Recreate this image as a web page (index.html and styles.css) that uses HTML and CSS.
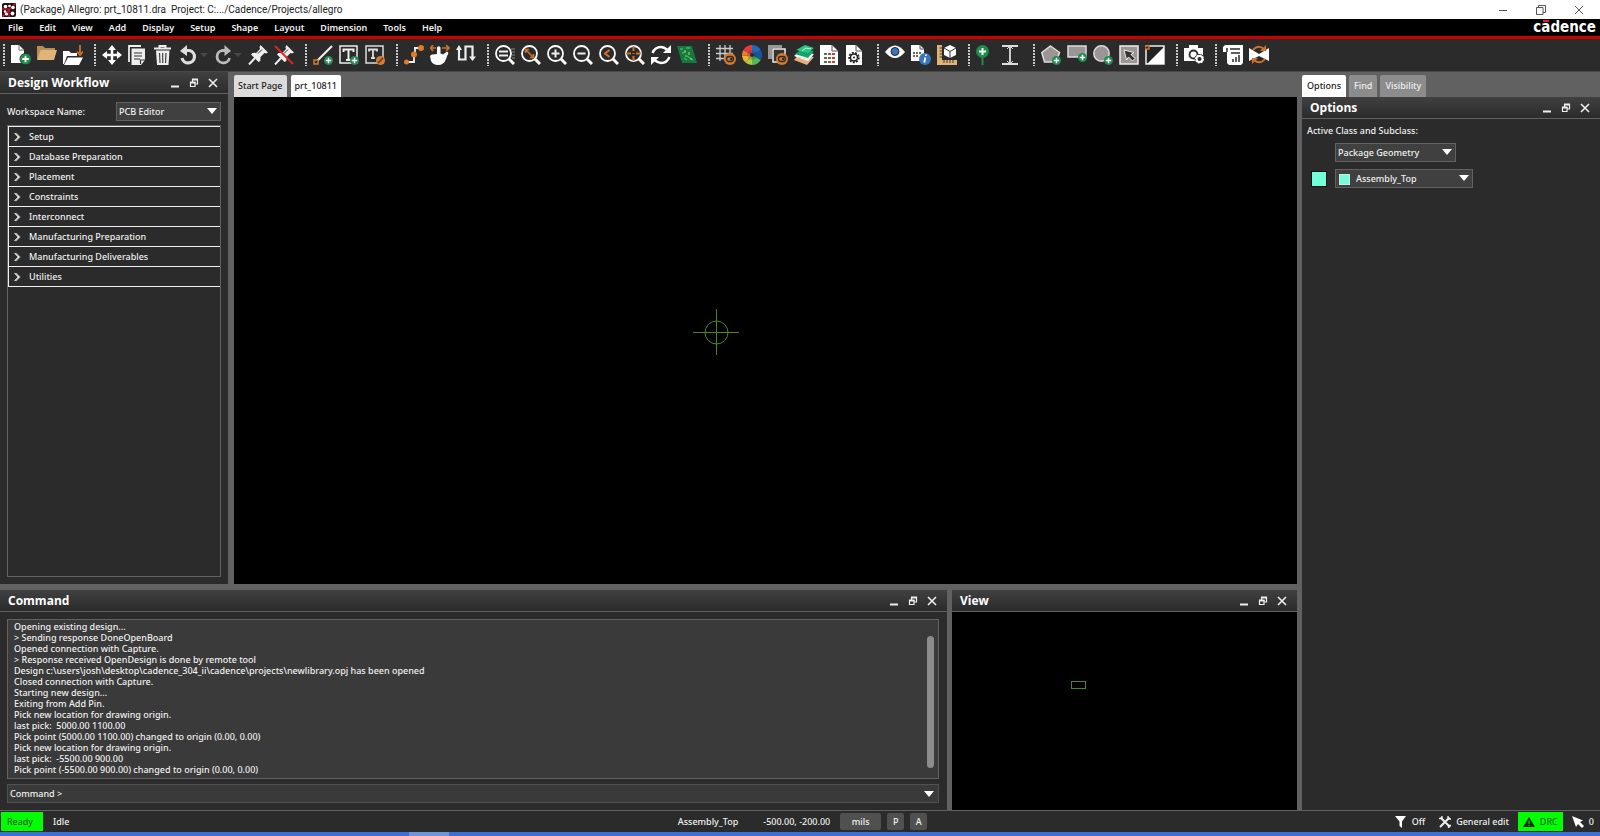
FILE: index.html
```html
<!DOCTYPE html>
<html lang="en">
<head>
    <meta charset="UTF-8">
    <meta name="viewport" content="width=device-width, initial-scale=1.0">
    <title>Allegro - prt_10811.dra</title>
    <link rel="stylesheet" href="styles.css">
</head>
<body>
    <!-- shared icon parts -->
    <svg class="defs" width="0" height="0">
        <symbol id="plus" viewBox="0 0 9 9">
            <circle cx="4.5" cy="4.5" r="4.5" fill="#1d8c4c"/>
            <path d="M4.500 1.800V7.200M1.800 4.500H7.200" stroke="#fff" stroke-width="1.5"/>
        </symbol>
        <symbol id="lens" viewBox="0 0 20 20">
            <circle cx="8.500" cy="8.500" r="7.500" fill="none" stroke="#fff" stroke-width="1.800"/>
            <path d="M14 14L19 19" stroke="#fff" stroke-width="3"/>
        </symbol>
        <symbol id="toggle" viewBox="0 0 12 12">
            <circle cx="6" cy="6" r="6" fill="#d67a2c"/>
            <rect x="2.500" y="3.500" width="7" height="5" rx="2.500" fill="none" stroke="#2b2b2b" stroke-width="1.300"/>
            <circle cx="7.200" cy="6" r="1.300" fill="#2b2b2b"/>
        </symbol>
        <symbol id="tack" viewBox="0 0 20 20">
            <path d="M12.500 0L20 7.500L18 8.500L16.500 8L12.500 12L12.300 16L10.500 17L3 9.500L4.500 8L8.500 7.700L12 4L11.500 2Z" fill="#eee"/>
            <path d="M7 13L1 19.500" stroke="#eee" stroke-width="2"/>
            <path d="M10 8.500L14 4.500" stroke="#2b2b2b" stroke-width="1"/>
        </symbol>
        <symbol id="min" viewBox="0 0 10 10"><path d="M1 8.500H9" stroke="#eee" stroke-width="2"/></symbol>
        <symbol id="float" viewBox="0 0 10 10">
            <path d="M3.500 4V1.500H8.500V6H6.500M1.500 4.500H6V8.500H1.500Z" fill="none" stroke="#eee" stroke-width="1.200"/>
            <path d="M3 1.500H9M1 4.500H6.500" stroke="#eee" stroke-width="1.800"/>
        </symbol>
        <symbol id="close" viewBox="0 0 10 10"><path d="M1 1L9 9M9 1L1 9" stroke="#eee" stroke-width="1.600"/></symbol>
    </svg>

    <div class="titlebar">
        <svg width="14" height="14" viewBox="0 0 14 14">
            <rect width="14" height="14" rx="2" fill="#211"/>
            <path d="M0 14L14 0M7 7V14M0 6H7" stroke="#c8102e" stroke-width="1.500"/>
            <g fill="#fff"><circle cx="3.500" cy="3.500" r="1.800"/><circle cx="7.500" cy="3" r="1.300"/><circle cx="11" cy="4.500" r="1.800"/><circle cx="3" cy="8.500" r="1.300"/><circle cx="4.500" cy="11" r="1.600"/><circle cx="10.500" cy="10.500" r="1.900"/></g>
        </svg>
        <span class="title">(Package) Allegro: prt_10811.dra&nbsp; Project: C:.../Cadence/Projects/allegro</span>
        <div class="window-buttons">
            <button aria-label="Minimize"><svg width="10" height="10" viewBox="0 0 10 10"><path d="M1 5.500H9" stroke="#555"/></svg></button>
            <button aria-label="Restore"><svg width="10" height="10" viewBox="0 0 10 10"><path d="M.5 2.500H7V9.500H.5ZM2.500 2.500V.5H9.500V7.500H7" fill="none" stroke="#555"/></svg></button>
            <button aria-label="Close"><svg width="10" height="10" viewBox="0 0 10 10"><path d="M1 1L9 9M9 1L1 9" stroke="#555"/></svg></button>
        </div>
    </div>

    <nav class="menubar">
        <a href="#">File</a>
        <a href="#">Edit</a>
        <a href="#">View</a>
        <a href="#">Add</a>
        <a href="#">Display</a>
        <a href="#">Setup</a>
        <a href="#">Shape</a>
        <a href="#">Layout</a>
        <a href="#">Dimension</a>
        <a href="#">Tools</a>
        <a href="#">Help</a>
        <span class="brand">c<span class="bar">a</span>dence</span>
    </nav>

    <div class="toolbar">
        <div class="tools">
            <button aria-label="New"><svg viewBox="0 0 20 20"><path d="M0 0H8L13 5V18H0Z" fill="#fff"/><path d="M8 0V5H13" fill="none" stroke="#777"/><circle cx="14.500" cy="14" r="6" fill="#2b2b2b"/><use href="#plus" x="9" y="8.500" width="11" height="11"/></svg></button>
            <button aria-label="Open"><svg viewBox="0 0 20 20"><path d="M0 15V1H6L8 3H18V5H4Z" fill="#b98d55"/><path d="M3.500 5H20L17 15H0Z" fill="#dfb478"/></svg></button>
            <button aria-label="Save"><svg viewBox="0 0 20 20"><path d="M0 19V6H6L8 8H14V11H4L1 19Z" fill="#fff"/><path d="M5 12.500H20L16 20H1Z" fill="#fff"/><path d="M17 0V8M14 6.500L17 10L20 6.500" fill="none" stroke="#cf7228" stroke-width="1.800"/></svg></button>
        </div>
        <div class="tools">
            <button aria-label="Move"><svg viewBox="0 0 20 20"><path d="M10 2V18M2 10H18" stroke="#fff" stroke-width="2.500"/><path d="M10 0L14 5H6ZM10 20L14 15H6ZM0 10L5 6V14ZM20 10L15 6V14Z" fill="#fff"/></svg></button>
            <button aria-label="Copy"><svg viewBox="0 0 20 20"><path d="M1 17V1H13" fill="none" stroke="#eee" stroke-width="1.800"/><path d="M3.500 3.500H17V15L13 20H3.500Z" fill="#eee"/><path d="M6 8H14M6 11H14M6 14H12M12.500 19V15H17" fill="none" stroke="#333" stroke-width="1.200"/></svg></button>
            <button aria-label="Delete"><svg viewBox="0 0 20 20"><path d="M0 3.500H17M5.500 3V1H11.500V3" fill="none" stroke="#eee" stroke-width="2"/><path d="M2 5.500H15.500L14.500 20H3Z" fill="#eee"/><path d="M5.500 8L6 18M8.700 8V18M12 8L11.500 18" stroke="#444" stroke-width="1.200"/></svg></button>
            <button aria-label="Undo"><svg viewBox="0 0 20 20"><path d="M5 5.500H9.500A6.300 6.300 0 1 1 2 13" fill="none" stroke="#ddd" stroke-width="3.200"/><path d="M0 6L7 0V11Z" fill="#ddd"/></svg></button>
            <i class="more"></i>
            <button aria-label="Redo"><svg viewBox="0 0 20 20"><path d="M12 5.500H8A6.300 6.300 0 1 0 15.500 13" fill="none" stroke="#bbb" stroke-width="2.800"/><path d="M17 6L10.500 0V11Z" fill="#bbb"/></svg></button>
            <i class="more"></i>
            <button aria-label="Fix"><svg viewBox="0 0 20 20"><use href="#tack"/></svg></button>
            <button aria-label="Unfix"><svg viewBox="0 0 20 20"><use href="#tack"/><path d="M1 1L19 19" stroke="#e02828" stroke-width="1.800"/></svg></button>
        </div>
        <div class="tools">
            <button aria-label="Add line"><svg viewBox="0 0 20 20"><path d="M4 16L19 1" stroke="#eee" stroke-width="2.200"/><path d="M1 15H5V19H1Z" fill="#2b2b2b" stroke="#d67a2c" stroke-width="1.500"/><use href="#plus" x="11" y="11" width="9" height="9"/></svg></button>
            <button aria-label="Add text"><svg viewBox="0 0 20 20"><rect x="1" y="1" width="17" height="17" fill="none" stroke="#eee" stroke-width="1.500"/><path d="M4.500 7V4.500H14.500V7M9.500 4.500V15M7 15H12" fill="none" stroke="#eee" stroke-width="2"/><use href="#plus" x="11" y="11" width="9" height="9"/></svg></button>
            <button aria-label="Edit text"><svg viewBox="0 0 20 20"><rect x="1" y="1" width="17" height="17" fill="none" stroke="#ddd" stroke-width="1.500"/><path d="M4 6.500V4.500H12V6.500M8 4.500V13M6 13H10" fill="none" stroke="#ddd" stroke-width="1.800"/><circle cx="15.500" cy="15.500" r="4.500" fill="#d67a2c"/><path d="M13 18L18 13" stroke="#4a3a30" stroke-width="1.500"/></svg></button>
        </div>
        <div class="tools">
            <button aria-label="Add connect"><svg viewBox="0 0 20 20"><path d="M3 17H10V9M10 3H17M11 3V8" fill="none" stroke="#eee" stroke-width="1.800"/><g fill="#e07b28"><circle cx="2.500" cy="17" r="2.500"/><circle cx="10" cy="9.500" r="3"/><circle cx="17" cy="3" r="3"/></g></svg></button>
            <button aria-label="Slide"><svg viewBox="0 0 20 20"><path d="M7 2.500Q8.500 0 10.500 2.500V8.500L13 9.500L17 6.500L18.500 8Q17 11 16 14Q14 20 8 20Q3 20 1 16L0 11Q1 9 3 9.500L7 9Z" fill="#fff"/><path d="M0 3H6M3 0L.5 3L3 6M12 3H19M16 0L19 3L16 6" fill="none" stroke="#cf7228" stroke-width="1.700"/></svg></button>
            <button aria-label="Delay tune"><svg viewBox="0 0 20 20"><path d="M3 4V14.500H9.500V1.500H16.500V13" fill="none" stroke="#eee" stroke-width="2.200"/><path d="M0 5L3 0L6 5ZM13 11.500H20L16.500 16Z" fill="#eee"/></svg></button>
        </div>
        <div class="tools">
            <button aria-label="Zoom points"><svg viewBox="0 0 20 20"><use href="#lens"/><path d="M4 6.500H13M4 10.500H13" stroke="#eee" stroke-width="1.800"/><path d="M16 4H20M17 7H20M17 10H20M17 13H20" stroke="#888"/></svg></button>
            <button aria-label="Zoom fit"><svg viewBox="0 0 20 20"><use href="#lens"/><path d="M5 5L12 12M4.500 8V4.500H8M9 12.500H12.500V9" fill="none" stroke="#cf7228" stroke-width="1.500"/></svg></button>
            <button aria-label="Zoom in"><svg viewBox="0 0 20 20"><use href="#lens"/><path d="M4.500 8.500H12.500M8.500 4.500V12.500" stroke="#eee" stroke-width="2"/></svg></button>
            <button aria-label="Zoom out"><svg viewBox="0 0 20 20"><use href="#lens"/><path d="M4.500 8.500H12.500" stroke="#eee" stroke-width="2"/></svg></button>
            <button aria-label="Zoom previous"><svg viewBox="0 0 20 20"><use href="#lens"/><path d="M10.500 5L6 8.500L10.500 12" fill="none" stroke="#cf7228" stroke-width="2"/></svg></button>
            <button aria-label="Zoom center"><svg viewBox="0 0 20 20"><use href="#lens"/><path d="M8.500 1V6M8.500 11V16M1 8.500H6M11 8.500H16M8.500 8V9" stroke="#cf7228" stroke-width="2"/></svg></button>
            <button aria-label="Redraw"><svg viewBox="0 0 20 20"><path d="M1.500 8Q4 2 10 2Q13 2 16.500 5M18.500 12Q16 18 10 18Q7 18 3.500 15" fill="none" stroke="#fff" stroke-width="2.400"/><path d="M20 0V8H12ZM0 20V12H8Z" fill="#fff"/></svg></button>
            <button aria-label="3D canvas"><svg viewBox="0 0 20 20"><path d="M0 1H15L20 18H5Z" fill="#16783f"/><path d="M3 4H6M9 3H13M5 8L9 7M10 11L16 15M7 13L10 15" stroke="#35b878" stroke-width="1.500"/><path d="M8 5V7M12 7V10M9 10V12M14 13V15" stroke="#b8cf50"/></svg></button>
        </div>
        <div class="tools">
            <button aria-label="Grid toggle"><svg viewBox="0 0 20 20"><path d="M4 0V16M9 0V16M14 0V11M0 3.500H17M0 8.500H17M0 13.500H9" stroke="#ccc" stroke-width="1.300"/><use href="#toggle" x="8" y="8" width="12" height="12"/></svg></button>
            <button aria-label="Color"><svg viewBox="0 0 20 20"><path d="M10 10L10 0A10 10 0 0 1 18.700 5Z" fill="#1b6cc0"/><path d="M10 10L18.700 5A10 10 0 0 1 18.700 15Z" fill="#16549c"/><path d="M10 10L18.700 15A10 10 0 0 1 10 20Z" fill="#55b558"/><path d="M10 10L10 20A10 10 0 0 1 3.500 17.500Z" fill="#a9cf44"/><path d="M10 10L3.500 17.500A10 10 0 0 1 0 11Z" fill="#f5b32c"/><path d="M10 10L0 11A10 10 0 0 1 1.500 5Z" fill="#f07c30"/><path d="M10 10L1.500 5A10 10 0 0 1 10 0Z" fill="#e43d3d"/><circle cx="10" cy="10" r="4.800" fill="#333" opacity=".25"/><circle cx="10" cy="10" r="2" fill="#2b2b2b"/></svg></button>
            <button aria-label="Shadow toggle"><svg viewBox="0 0 20 20"><path d="M0 0H14V3H4V14H0Z" fill="#9b9595"/><path d="M5 4H17V17H5Z" fill="#333" stroke="#eee" stroke-width="1.500"/><use href="#toggle" x="8" y="8" width="12" height="12"/></svg></button>
            <button aria-label="Cross section"><svg viewBox="0 0 20 20"><path d="M0 15L5 9L20 12L13 20Z" fill="#e9ad82"/><path d="M0 11L6 6L20 9L14 16Z" fill="#fff"/><path d="M1 9L7 5L20 6L14 13Z" fill="#15a468"/><path d="M2 5L11 0L20 3L14 8Z" fill="#25c783"/><path d="M3 12L14 14L18 9M8 6L12 3L17 4" fill="none" stroke="#c8f0dd"/></svg></button>
            <button aria-label="Constraints"><svg viewBox="0 0 20 20"><path d="M0 0H12L18 6V20H0Z" fill="#fff"/><path d="M12 0V6H18" fill="none" stroke="#555"/><path d="M4 9H7M8 13H11M4 17H7" stroke="#278a50" stroke-width="2.200"/><path d="M8 9H11M12 9H15M4 13H7M12 13H15M8 17H11M12 17H15" stroke="#d23c3c" stroke-width="2.200"/></svg></button>
            <button aria-label="Parameters"><svg viewBox="0 0 20 20"><path d="M0 0H10L16 6V20H0Z" fill="#fff"/><path d="M10 0V6H16" fill="none" stroke="#555"/><circle cx="8" cy="12.500" r="4.800" fill="none" stroke="#222" stroke-width="1.800" stroke-dasharray="2 1.300"/><circle cx="8" cy="12.500" r="3.500" fill="none" stroke="#222" stroke-width="1.500"/><circle cx="8" cy="12.500" r="1" fill="#222"/></svg></button>
        </div>
        <div class="tools">
            <button aria-label="Show element"><svg viewBox="0 0 20 20"><path d="M0 7Q10-6 20 7Q10 19 0 7Z" fill="#fff"/><circle cx="10" cy="6.500" r="4" fill="#3b76bd" stroke="#223" /></svg></button>
            <button aria-label="Report info"><svg viewBox="0 0 20 20"><path d="M0 0H9L13 4V16H0Z" fill="#fff"/><path d="M9 0V4H13" fill="none" stroke="#555"/><path d="M2 8H4M8 8H10M5 11H7" stroke="#278a50" stroke-width="2"/><path d="M5 8H7M2 11H4" stroke="#d23c3c" stroke-width="2"/><circle cx="14" cy="14" r="6" fill="#3b76bd"/><path d="M15 9.500L14.800 11M14.300 12.500L13.300 17.500" stroke="#fff" stroke-width="1.800"/></svg></button>
            <button aria-label="Measure"><svg viewBox="0 0 20 20"><path d="M0 0H5V15H20V20H0Z" fill="#dfb478"/><path d="M2.500 3H5M2.500 6H5M2.500 9H5M2.500 12H5M7 15V18M10 15V18M13 15V18M16 15V18" stroke="#503820"/><path d="M13 0L19 3V10L13 13L7 10V3Z" fill="#fff"/><path d="M7 3L13 6.500L19 3M13 6.500V13" fill="none" stroke="#333"/></svg></button>
        </div>
        <div class="tools">
            <button aria-label="Add pin"><svg viewBox="0 0 20 20"><path d="M6.500 11V20" stroke="#1d8c4c" stroke-width="2"/><circle cx="6.500" cy="6.500" r="6.500" fill="#1d8c4c"/><path d="M6.500 3V10M3 6.500H10" stroke="#fff" stroke-width="2"/></svg></button>
            <button aria-label="Dimension"><svg viewBox="0 0 20 20"><path d="M0 1H16M0 19H16M8 1V19" stroke="#ddd" stroke-width="1.800"/><path d="M5 4L8 1L11 4M5 16L8 19L11 16" fill="none" stroke="#ddd"/></svg></button>
        </div>
        <div class="tools">
            <button aria-label="Add polygon"><svg viewBox="0 0 20 20"><path d="M9.500 1L18.500 7.500L15.500 17H3.500L.8 7.500Z" fill="#9b9595" stroke="#ddd" stroke-width="1.500"/><use href="#plus" x="11" y="11" width="9" height="9"/></svg></button>
            <button aria-label="Add rectangle"><svg viewBox="0 0 20 20"><path d="M1 1H19V12H1Z" fill="#9b9595" stroke="#ddd" stroke-width="1.500"/><use href="#plus" x="11" y="8" width="9" height="9"/></svg></button>
            <button aria-label="Add circle"><svg viewBox="0 0 20 20"><circle cx="8.500" cy="8.500" r="7.700" fill="#9b9595" stroke="#ddd" stroke-width="1.500"/><use href="#plus" x="11" y="11" width="9" height="9"/></svg></button>
            <button aria-label="Select shape"><svg viewBox="0 0 20 20"><rect x="1" y="1" width="18" height="18" fill="#9b9595" stroke="#eee" stroke-width="1.500"/><path d="M5 5L15 7.500L12 9.500L16 13.500L13.500 16L9.500 12L7.500 15Z" fill="#333" stroke="#eee"/></svg></button>
            <button aria-label="Void"><svg viewBox="0 0 20 20"><path d="M1 1H19V19H1Z" fill="#222" stroke="#eee" stroke-width="1.500"/><path d="M19 2V19H2Z" fill="#fff"/><path d="M0 1H4V4H0Z" fill="#2b2b2b" stroke="#cf7228" stroke-width="1.500"/></svg></button>
        </div>
        <div class="tools">
            <button aria-label="Snapshot"><svg viewBox="0 0 20 20"><path d="M0 3H5V0H14V3H19V16H0Z" fill="#fff"/><circle cx="9.500" cy="9.500" r="4" fill="#fff" stroke="#2b2b2b" stroke-width="1.800"/><circle cx="15.500" cy="14" r="5" fill="#2b2b2b"/><circle cx="15.500" cy="14" r="3" fill="none" stroke="#fff" stroke-width="2"/><circle cx="15.500" cy="14" r="4" fill="none" stroke="#fff" stroke-width="1.200" stroke-dasharray="1.500 1.600"/></svg></button>
        </div>
        <div class="tools">
            <button aria-label="Script"><svg viewBox="0 0 20 20"><path d="M2 0H20V18L18 20H6L4 18V7H0V2Z" fill="#fff"/><path d="M4 3V7M7 4H17M8 8H17M10 17V14M13 17V12M16 17V10" stroke="#2b2b2b" stroke-width="1.500"/></svg></button>
            <button aria-label="Flip"><svg viewBox="0 0 20 20"><path d="M0 3L10 9L20 3V16L10 11L0 16Z" fill="#fff"/><path d="M4 5Q9-1 15 4M16 14Q11 20 5 15" fill="none" stroke="#cf7228" stroke-width="1.800"/><path d="M17 0V6H11ZM3 19V13H9Z" fill="#cf7228"/></svg></button>
        </div>
    </div>

    <main class="workspace">
        <div class="left">
            <div class="upper">
                <section class="panel workflow">
                    <header class="panel-head">
                        <h2>Design Workflow</h2>
                        <button aria-label="Minimize"><svg><use href="#min"/></svg></button>
                        <button aria-label="Float"><svg><use href="#float"/></svg></button>
                        <button aria-label="Close"><svg><use href="#close"/></svg></button>
                    </header>
                    <div class="workflow-body">
                        <div class="workspace-name">
                            <label for="ws">Workspace Name:</label>
                            <span class="select"><select id="ws"><option>PCB Editor</option></select></span>
                        </div>
                        <ul class="steps">
                            <li><button>Setup</button></li>
                            <li><button>Database Preparation</button></li>
                            <li><button>Placement</button></li>
                            <li><button>Constraints</button></li>
                            <li><button>Interconnect</button></li>
                            <li><button>Manufacturing Preparation</button></li>
                            <li><button>Manufacturing Deliverables</button></li>
                            <li><button>Utilities</button></li>
                        </ul>
                    </div>
                </section>
                <section class="editor">
                    <div class="tabs doc-tabs">
                        <button>Start Page</button>
                        <button class="active">prt_10811</button>
                    </div>
                    <div class="canvas">
                        <svg class="origin" width="46" height="46" viewBox="0 0 46 46"><path d="M23.500 0V46M0 23.500H46" stroke="#4f8229"/><circle cx="23.500" cy="23.500" r="11.500" fill="none" stroke="#4f8229"/></svg>
                    </div>
                </section>
            </div>
            <div class="lower">
                <section class="panel command">
                    <header class="panel-head">
                        <h2>Command</h2>
                        <button aria-label="Minimize"><svg><use href="#min"/></svg></button>
                        <button aria-label="Float"><svg><use href="#float"/></svg></button>
                        <button aria-label="Close"><svg><use href="#close"/></svg></button>
                    </header>
                    <div class="command-body">
                        <div class="log">
                            <pre>Opening existing design...
&gt; Sending response DoneOpenBoard
Opened connection with Capture.
&gt; Response received OpenDesign is done by remote tool
Design c:\users\josh\desktop\cadence_304_ii\cadence\projects\newlibrary.opj has been opened
Closed connection with Capture.
Starting new design...
Exiting from Add Pin.
Pick new location for drawing origin.
last pick:  5000.00 1100.00
Pick point (5000.00 1100.00) changed to origin (0.00, 0.00)
Pick new location for drawing origin.
last pick:  -5500.00 900.00
Pick point (-5500.00 900.00) changed to origin (0.00, 0.00)</pre>
                            <div class="scrollbar"></div>
                        </div>
                        <div class="prompt">
                            <label for="cmd">Command &gt;</label>
                            <input id="cmd" type="text">
                            <button class="drop" aria-label="History"></button>
                        </div>
                    </div>
                </section>
                <section class="panel view">
                    <header class="panel-head">
                        <h2>View</h2>
                        <button aria-label="Minimize"><svg><use href="#min"/></svg></button>
                        <button aria-label="Float"><svg><use href="#float"/></svg></button>
                        <button aria-label="Close"><svg><use href="#close"/></svg></button>
                    </header>
                    <div class="canvas"><div class="extent"></div></div>
                </section>
            </div>
        </div>
        <aside class="right">
            <div class="tabs side-tabs">
                <button class="active">Options</button>
                <button>Find</button>
                <button>Visibility</button>
            </div>
            <section class="panel options">
                <header class="panel-head">
                    <h2>Options</h2>
                    <button aria-label="Minimize"><svg><use href="#min"/></svg></button>
                    <button aria-label="Float"><svg><use href="#float"/></svg></button>
                    <button aria-label="Close"><svg><use href="#close"/></svg></button>
                </header>
                <div class="options-body">
                    <label for="class">Active Class and Subclass:</label>
                    <div class="class-grid">
                        <span></span>
                        <span class="select class-select"><select id="class"><option>Package Geometry</option></select></span>
                        <button class="swatch" aria-label="Subclass color"></button>
                        <span class="select subclass-select"><select aria-label="Subclass"><option>Assembly_Top</option></select></span>
                    </div>
                </div>
            </section>
        </aside>
    </main>

    <footer class="status">
        <div class="status-left">
            <span class="ready">Ready</span>
            <span>Idle</span>
        </div>
        <div class="status-mid">
            <span class="layer">Assembly_Top</span>
            <span class="coords">-500.00, -200.00</span>
            <button class="units">mils</button>
            <button>P</button>
            <button>A</button>
        </div>
        <div class="status-right">
            <span class="item"><svg width="12" height="12" viewBox="0 0 12 12"><path d="M0 0H11L7 5.500V12L4.500 10V5.500Z" fill="#fff"/></svg>Off</span>
            <span class="item"><svg width="12" height="12" viewBox="0 0 12 12"><path d="M1.500 1.500L11 11M10.500 1.500L1 11" stroke="#eee" stroke-width="2"/><path d="M0 2.500H3V0M9 0V3H12M12 9.500H9.500V12" fill="none" stroke="#eee" stroke-width="1.300"/></svg>General edit</span>
            <span class="drc"><svg width="12" height="12" viewBox="0 0 12 12"><path d="M6 1L12 11H0Z" fill="#031"/><path d="M6 4.500V8M6 9V10" stroke="#0f0"/></svg>DRC</span>
            <span class="item"><svg width="12" height="12" viewBox="0 0 12 12"><path d="M0 0L11 4.500L8 6L12 10L10 12L6 8L4 11Z" fill="#fff"/></svg>0</span>
        </div>
    </footer>
    <div class="taskbar"></div>
</body>
</html>
```
FILE: styles.css
```css
* {
    box-sizing: border-box;
    margin: 0;
    padding: 0;
}

body {
    display: flex;
    flex-direction: column;
    height: 100vh;
    overflow: hidden;
    background: #616161;
    color: #f0f0f0;
    font-family: "Noto Sans", "Open Sans", sans-serif;
    font-size: 9px;
    font-weight: 500;
    line-height: 14px;
}

button, select, input {
    font: inherit;
    color: inherit;
    background: none;
    border: none;
    border-radius: 0;
}

.defs {
    position: absolute;
}

svg {
    display: block;
}

/* title and menu */
.titlebar {
    display: flex;
    align-items: center;
    height: 19px;
    padding: 0 16px 0 2px;
    background: #fff;
    color: #222;
    font-family: Roboto, "Open Sans", sans-serif;
    font-size: 10px;
    font-weight: 400;
}

.title {
    margin-left: 4px;
}

.window-buttons {
    display: flex;
    gap: 28px;
    margin-left: auto;
}

.window-buttons button {
    width: 10px;
    height: 10px;
}

.menubar {
    display: flex;
    align-items: center;
    gap: 16px;
    height: 20px;
    padding: 0 4px 0 8px;
    background: #000;
    border-bottom: 3px solid #cb0000;
    font-weight: 600;
}

.menubar a {
    color: #f0f0f0;
    text-decoration: none;
}

.brand {
    margin-left: auto;
    color: #fff;
    font-family: "DejaVu Sans Condensed", "DejaVu Sans", sans-serif;
    font-size: 15px;
    font-weight: 700;
    line-height: 19px;
}

.bar {
    position: relative;
}

.bar::before {
    content: "";
    position: absolute;
    top: 2px;
    left: 2px;
    width: 6px;
    height: 2px;
    background: #e0202c;
}

/* toolbar */
.toolbar {
    display: flex;
    align-items: center;
    gap: 11px;
    height: 33px;
    padding-left: 3px;
    background: #2b2b2b;
    border-bottom: 1px solid #484848;
}

.tools {
    display: flex;
    align-items: center;
    gap: 6px;
}

.tools::before {
    content: "";
    width: 2px;
    height: 22px;
    background: repeating-linear-gradient(#c8c8c8 0 2px, transparent 2px 3px);
}

.tools button, .tools svg {
    width: 20px;
    height: 20px;
}

.more {
    width: 8px;
    margin-left: -6px;
    border: 4px solid transparent;
    border-top-color: #484848;
    border-bottom: 0;
}

/* workspace */
.workspace {
    display: flex;
    flex: 1;
    gap: 5px;
    min-height: 0;
}

.left {
    display: flex;
    flex: 1;
    flex-direction: column;
    gap: 6px;
    min-width: 0;
}

.upper {
    display: flex;
    flex: 1;
    gap: 6px;
    min-height: 0;
}

.lower {
    display: flex;
    gap: 5px;
    height: 220px;
}

.panel {
    display: flex;
    flex-direction: column;
    background: #2b2b2b;
}

.panel-head {
    display: flex;
    align-items: center;
    gap: 9px;
    height: 22px;
    padding: 0 10px 0 8px;
    background: linear-gradient(#404040, #2b2b2b);
    border-bottom: 1px solid #616161;
}

.panel-head h2 {
    flex: 1;
    font-family: "Open Sans", sans-serif;
    font-size: 12px;
    font-weight: 700;
    color: #fff;
}

.panel-head button, .panel-head svg {
    width: 10px;
    height: 10px;
}

.workflow {
    width: 228px;
}

.workflow-body {
    display: flex;
    flex: 1;
    flex-direction: column;
    padding: 8px 7px 7px;
}

.workspace-name {
    display: flex;
    align-items: center;
    justify-content: space-between;
    margin-bottom: 4px;
}

.workspace-name .select {
    width: 105px;
}

.select {
    position: relative;
    display: block;
}

.select select {
    appearance: none;
    display: block;
    width: 100%;
    height: 19px;
    padding: 0 16px 0 2px;
    background: #404040;
    border: 1px solid #616161;
}

.select::after, .drop::before {
    content: "";
    position: absolute;
    top: 6px;
    right: 4px;
    border: 5px solid transparent;
    border-top: 6px solid #fff;
    border-bottom: 0;
}

.steps {
    flex: 1;
    border: 1px solid #616161;
    list-style: none;
}

.steps li {
    height: 20px;
    border-top: 1px solid #f0f0f0;
    border-left: 1px solid #f0f0f0;
}

.steps li:last-child {
    height: 21px;
    border-bottom: 1px solid #f0f0f0;
}

.steps button {
    display: flex;
    align-items: center;
    gap: 11px;
    width: 100%;
    height: 19px;
    padding-left: 3px;
}

.steps button::before {
    content: "";
    width: 5px;
    height: 5px;
    border: solid #fff;
    border-width: 1px 1px 0 0;
    box-shadow: 1px -1px 0 #aaa;
    transform: rotate(45deg);
}

.editor {
    display: flex;
    flex: 1;
    flex-direction: column;
}

.tabs {
    display: flex;
    align-items: flex-end;
    height: 25px;
}

.tabs button {
    height: 22px;
    padding: 0 4px;
    border-radius: 2px 2px 0 0;
}

.doc-tabs {
    gap: 4px;
}

.doc-tabs button {
    background: #dcdcdc;
    color: #222;
}

.side-tabs {
    gap: 3px;
}

.side-tabs button {
    padding: 0 5px;
    background: #8c8c8c;
}

.tabs .active {
    background: #fff;
    color: #222;
}

.canvas {
    position: relative;
    flex: 1;
    background: #000;
}

.origin {
    position: absolute;
    top: 43.5%;
    left: 43.2%;
}

.extent {
    position: absolute;
    top: 35%;
    left: 34.6%;
    width: 15px;
    height: 8px;
    border: 1px solid #4f8229;
}

/* command */
.command {
    flex: 1;
}

.command-body {
    display: flex;
    flex: 1;
    flex-direction: column;
    gap: 5px;
    padding: 7px 8px 7px 7px;
}

.log {
    display: flex;
    flex: 1;
    justify-content: space-between;
    padding: 1px 4px 1px 6px;
    background: #3a3a3a;
    border: 1px solid #616161;
}

.log pre {
    font: inherit;
    line-height: 11px;
}

.scrollbar {
    width: 7px;
    margin: 15px 0 9px;
    background: #8c8c8c;
    border-radius: 4px;
}

.prompt {
    position: relative;
    display: flex;
    align-items: center;
    height: 19px;
    padding-left: 2px;
    background: #3a3a3a;
    border: 1px solid #505050;
}

.prompt input {
    flex: 1;
    height: 17px;
    margin-left: 4px;
    outline: none;
}

.drop {
    width: 18px;
    height: 17px;
}

.view {
    width: 345px;
}

/* options */
.right {
    display: flex;
    flex-direction: column;
    width: 298px;
}

.options {
    flex: 1;
}

.options-body {
    padding: 5px;
}

.class-grid {
    display: grid;
    grid-template-columns: 22px 1fr;
    gap: 7px 6px;
    align-items: center;
    margin-top: 5px;
}

.class-select {
    width: 121px;
}

.subclass-select {
    width: 138px;
}

.subclass-select select {
    padding-left: 20px;
}

.subclass-select::before {
    content: "";
    position: absolute;
    top: 5px;
    left: 4px;
    width: 9px;
    height: 9px;
    background: #70ffd8;
    border: 1px solid #e0e0e0;
}

.swatch {
    justify-self: center;
    width: 16px;
    height: 16px;
    margin-left: 2px;
    background: #70ffd8;
    border: 1px solid #111;
}

/* status bar */
.status {
    display: flex;
    height: 22px;
    padding: 0 6px 0 1px;
    background: #2b2b2b;
    border-top: 1px solid #616161;
}

.status-left, .status-mid, .status-right, .item, .drc, .ready {
    display: flex;
    align-items: center;
}

.status-left, .status-right {
    flex: 1;
}

.status-left {
    gap: 10px;
}

.ready, .drc {
    height: 19px;
    background: #00ff00;
    color: #064d06;
    font-weight: 400;
}

.ready {
    width: 42px;
    padding-left: 6px;
}

.status-mid {
    gap: 6px;
    padding-left: 10px;
}

.layer {
    margin-right: 19px;
}

.coords {
    margin-right: 4px;
}

.status-mid button {
    width: 17px;
    height: 17px;
    background: #505050;
    border-radius: 2px;
}

.status-mid .units {
    width: 41px;
}

.status-right {
    justify-content: flex-end;
    gap: 9px;
}

.item {
    gap: 5px;
}

.item + .item {
    margin-left: 5px;
}

.drc {
    gap: 5px;
    width: 45px;
    padding-left: 5px;
}

.taskbar {
    height: 4px;
    background: linear-gradient(90deg, #3c70d8 0 409px, #6e94e0 409px 449px, #3c70d8 449px);
}
```
